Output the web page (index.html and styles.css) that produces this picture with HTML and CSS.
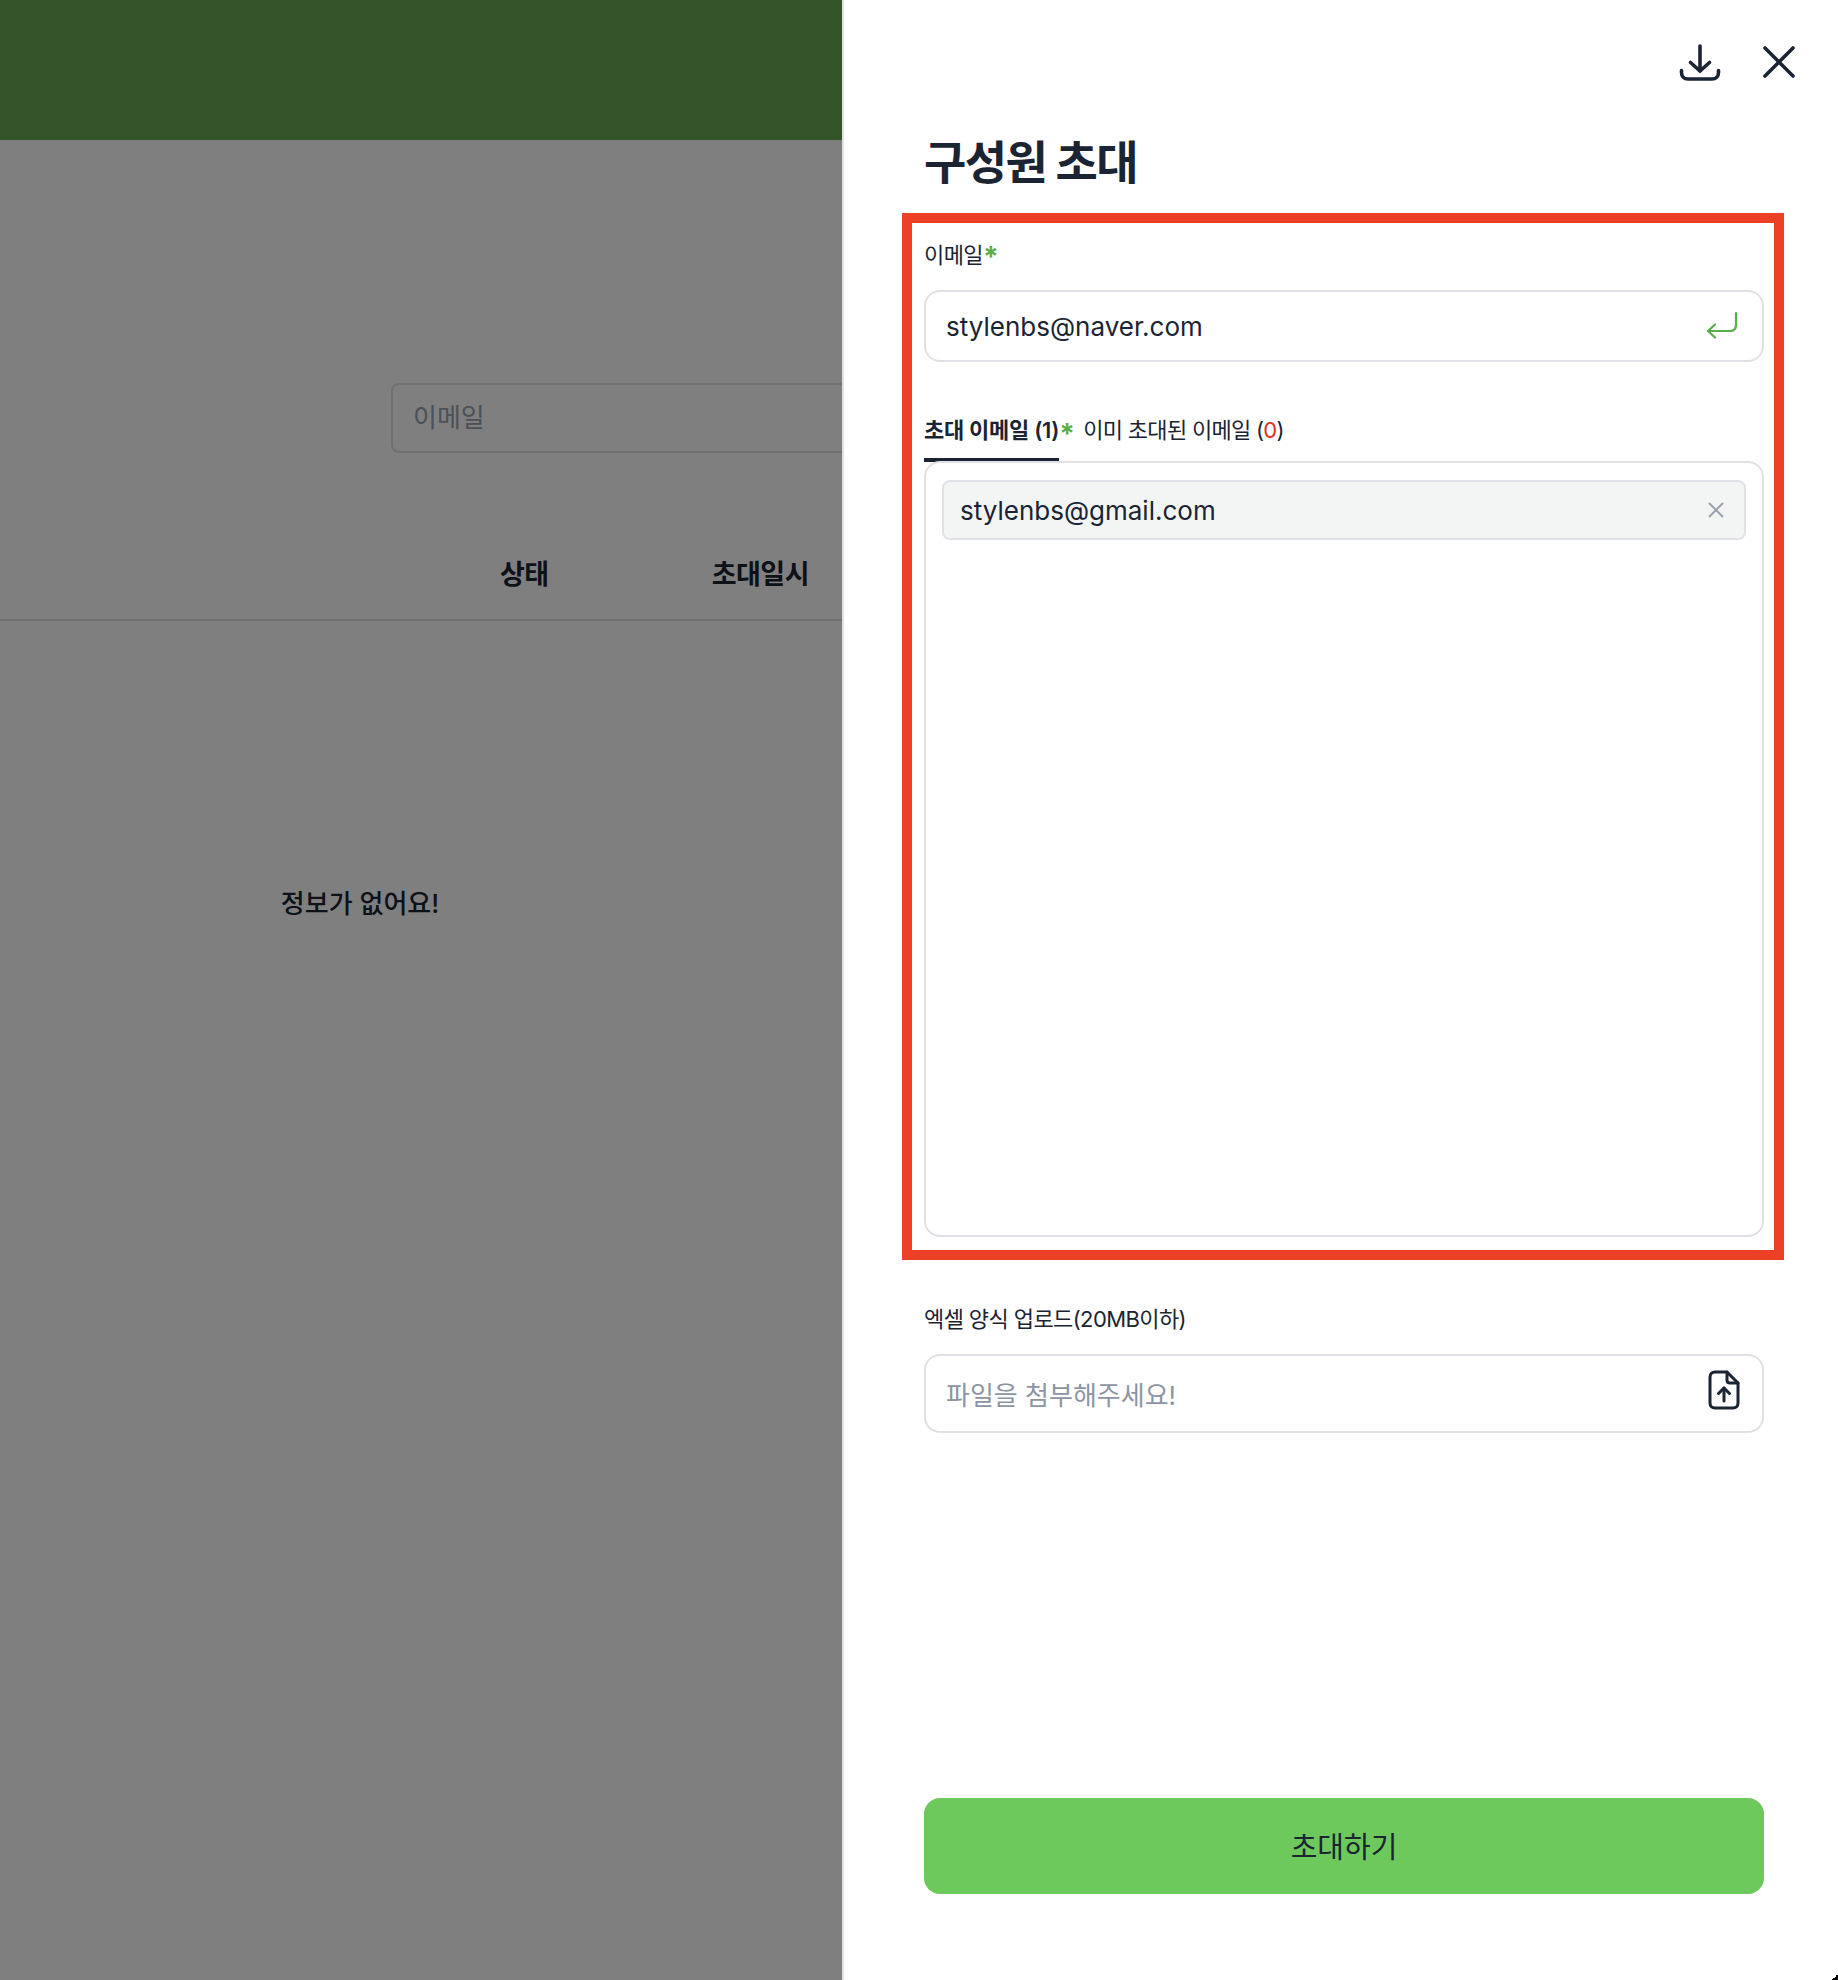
FILE: index.html
```html
<!DOCTYPE html>
<html lang="ko">
<head>
    <meta charset="UTF-8">
    <title>구성원 초대</title>
    <link rel="stylesheet" href="styles.css">
</head>
<body>
    <div class="page">
        <div class="behind">
            <div class="top-bar"></div>
            <div class="search-row">
                <div class="search-box">이메일</div>
            </div>
            <div class="table-head">
                <div class="col-status">상태</div>
                <div class="col-date">초대일시</div>
            </div>
            <div class="empty">정보가 없어요!</div>
        </div>

        <div class="drawer">
            <div class="drawer-actions">
                <svg class="icon-download" viewBox="0 0 42 38" fill="none" stroke="#1a2433" stroke-width="3.6" stroke-linecap="round" stroke-linejoin="round">
                    <path d="M21 2V27"/>
                    <path d="M11.5 18.5L21 27L30.5 18.5"/>
                    <path d="M2.5 26.5V28.5C2.5 32.5 5 35 9 35H33C37 35 39.5 32.5 39.5 28.5V26.5"/>
                </svg>
                <svg class="icon-close" viewBox="0 0 32 32" fill="none" stroke="#1a2433" stroke-width="3.6" stroke-linecap="round">
                    <path d="M2 2L30 30"/>
                    <path d="M30 2L2 30"/>
                </svg>
            </div>

            <h1>구성원 초대</h1>

            <div class="marked">
                <div class="field-label">이메일<span class="req">*</span></div>
                <div class="input-box email-input">
                    <span>stylenbs@naver.com</span>
                    <svg class="icon-enter" viewBox="0 0 32 28" fill="none" stroke="#5aad4b" stroke-width="2.2" stroke-linecap="round" stroke-linejoin="round">
                        <path d="M30 2V14C30 18 28 20 24 20H2"/>
                        <path d="M9 13.5L2 20L9 26.5"/>
                    </svg>
                </div>

                <div class="tabs">
                    <div class="tab active">초대 이메일 (1)</div>
                    <span class="req tab-req">*</span>
                    <div class="tab">이미 초대된 이메일 (<span class="zero">0</span>)</div>
                </div>
                <div class="email-list">
                    <div class="chip">
                        <span>stylenbs@gmail.com</span>
                        <svg class="icon-remove" viewBox="0 0 16 16" fill="none" stroke="#9aa1ad" stroke-width="2">
                            <path d="M1 1L15 15"/>
                            <path d="M15 1L1 15"/>
                        </svg>
                    </div>
                </div>
            </div>

            <div class="field-label upload-label">엑셀 양식 업로드(20MB이하)</div>
            <div class="input-box file-input">
                <span class="placeholder">파일을 첨부해주세요!</span>
                <svg class="icon-file" viewBox="0 0 32 40" fill="none" stroke="#1a2433" stroke-width="3" stroke-linecap="round" stroke-linejoin="round">
                    <path d="M19 2H7C4 2 2 4 2 7V33C2 36 4 38 7 38H25C28 38 30 36 30 33V13Z"/>
                    <path d="M19 2V10C19 12 20 13 22 13H30"/>
                    <path d="M16 31V18"/>
                    <path d="M10.5 23.5L16 18L21.5 23.5"/>
                </svg>
            </div>

            <button class="submit">초대하기</button>
        </div>
        <div class="corner-mark"></div>
    </div>
</body>
</html>
```

FILE: styles.css
```css
* {
    box-sizing: border-box;
}

body {
    margin: 0;
    background-color: #ffffff;
    color: #1a2433;
    font-family: Inter, "Noto Sans CJK KR", sans-serif;
}

.page {
    position: relative;
    display: flex;
    height: 1980px;
    overflow: hidden;
}

.corner-mark {
    position: absolute;
    right: 0;
    bottom: 0;
    width: 6px;
    height: 6px;
    background: linear-gradient(to bottom right, transparent 50%, #000000 50%);
}

/* page under the drawer */
.behind {
    position: relative;
    width: 842px;
    flex-shrink: 0;
    overflow: hidden;
    background-color: #ffffff;
}

.behind::after {
    content: "";
    position: absolute;
    inset: 0;
    background-color: rgba(0, 0, 0, 0.5);
}

.top-bar {
    height: 140px;
    background-color: #65a850;
}

.search-row {
    padding: 243px 0 0 391px;
}

.search-box {
    width: 600px;
    height: 70px;
    padding-left: 20px;
    border: 2px solid #e0e1e6;
    border-radius: 8px;
    color: #9aa1ad;
    font-size: 26px;
    line-height: 66px;
}

.table-head {
    display: flex;
    height: 168px;
    padding-top: 99px;
    border-bottom: 2px solid #e0e1e6;
    font-size: 27px;
    font-weight: 700;
    line-height: 46px;
    letter-spacing: -0.5px;
}

.col-status {
    margin-left: 500px;
}

.col-date {
    margin-left: 163px;
}

.empty {
    margin-top: 263px;
    padding-right: 122px;
    text-align: center;
    font-size: 26px;
    font-weight: 500;
    line-height: 40px;
}

/* drawer */
.drawer {
    display: flex;
    flex-direction: column;
    flex: 1;
    padding: 0 74px 0 80px;
    border-left: 2px solid #e0e1e6;
}

.drawer-actions {
    display: flex;
    justify-content: flex-end;
    align-items: flex-start;
    gap: 42px;
    height: 140px;
    padding: 45px 0 0 0;
    margin-right: -31px;
}

.icon-download {
    width: 42px;
    height: 38px;
    margin-top: -1px;
}

.icon-close {
    width: 32px;
    height: 32px;
    margin-top: 1px;
}

h1 {
    margin: 0;
    height: 73px;
    font-size: 46px;
    font-weight: 700;
    line-height: 44px;
    letter-spacing: -1.6px;
}

.marked {
    margin: 0 -20px 0 -22px;
    padding: 0 10px 13px 12px;
    border: 10px solid #ec4126;
}

.field-label {
    height: 67px;
    padding-top: 16px;
    font-size: 22px;
    line-height: 32px;
    letter-spacing: -0.6px;
}

.req {
    color: #5aad4b;
    font-size: 28px;
    font-weight: 700;
    line-height: 0;
    vertical-align: -4px;
}

.input-box {
    display: flex;
    justify-content: space-between;
    align-items: center;
    border: 2px solid #e0e1e6;
    border-radius: 16px;
    font-size: 26px;
}

.email-input {
    height: 72px;
    padding: 0 24px 0 20px;
}

.icon-enter {
    width: 32px;
    height: 28px;
    margin-top: -2px;
}

.tabs {
    display: flex;
    align-items: flex-start;
    height: 62px;
    margin-top: 38px;
    font-size: 22px;
    line-height: 34px;
    letter-spacing: -0.7px;
}

.tab {
    height: 62px;
    padding-top: 13px;
}

.tab.active {
    font-weight: 600;
    letter-spacing: -0.3px;
    border-bottom: 4px solid #1a2433;
}

.tab-req {
    padding-top: 34px;
    margin-right: 9px;
}

.zero {
    color: #e0301e;
}

.email-list {
    position: relative;
    height: 776px;
    padding: 17px 16px;
    margin-top: -1px;
    border: 2px solid #e0e1e6;
    border-radius: 16px;
}

.chip {
    display: flex;
    justify-content: space-between;
    align-items: center;
    height: 60px;
    padding: 0 20px 0 16px;
    background-color: #f3f5f5;
    border: 2px solid #e0e1e6;
    border-radius: 8px;
    font-size: 26px;
}

.icon-remove {
    width: 16px;
    height: 16px;
}

.upload-label {
    margin-top: 31px;
    height: 63px;
    padding-top: 12px;
}

.file-input {
    height: 79px;
    padding: 0 22px 0 20px;
}

.placeholder {
    color: #8d95a3;
}

.icon-file {
    width: 32px;
    height: 40px;
    margin-top: -8px;
}

.submit {
    margin-top: 365px;
    height: 96px;
    padding-bottom: 4px;
    background-color: #6ec95c;
    color: #1a2433;
    border: none;
    border-radius: 16px;
    font-family: inherit;
    font-size: 29px;
    cursor: pointer;
}
```
